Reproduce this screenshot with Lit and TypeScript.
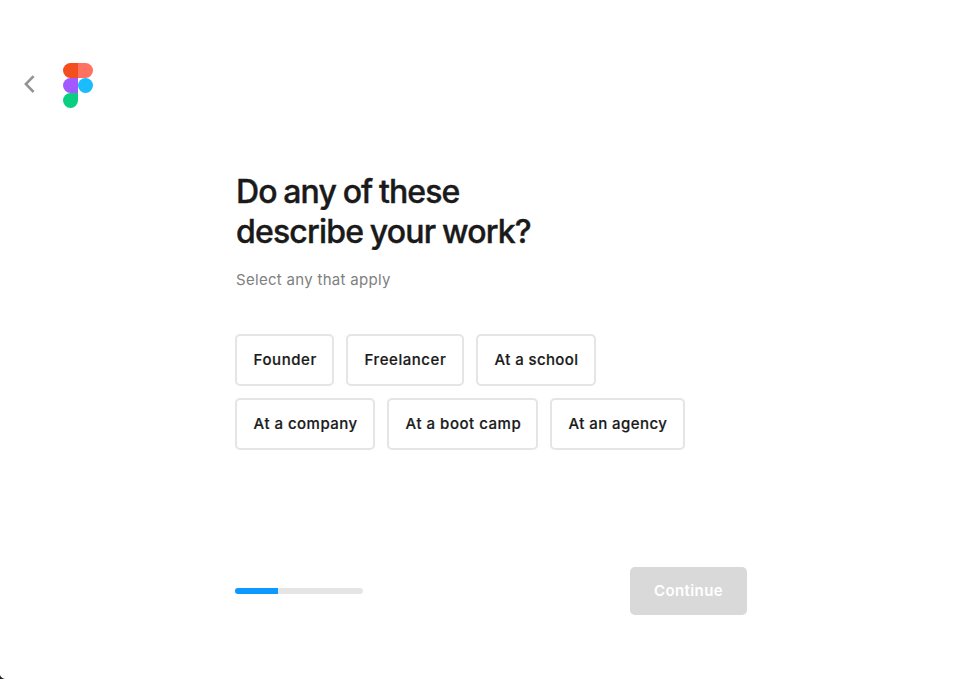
import { LitElement, html, css } from "lit";
import { customElement, state } from "lit/decorators.js";
import { classMap } from "lit/directives/class-map.js";
import { styleMap } from "lit/directives/style-map.js";

interface Option {
  label: string;
  width: number;
  spacing: number;
}

const OPTION_ROWS: Option[][] = [
  [
    { label: "Founder", width: 99, spacing: 0.55 },
    { label: "Freelancer", width: 118, spacing: 0.55 },
    { label: "At a school", width: 120, spacing: 0.38 },
  ],
  [
    { label: "At a company", width: 140, spacing: 0.48 },
    { label: "At a boot camp", width: 151, spacing: 0.52 },
    { label: "At an agency", width: 135, spacing: 0.42 },
  ],
];

@customElement("app-root")
export class AppRoot extends LitElement {
  @state() private selected = new Set<string>();

  static styles = css`
    :host {
      display: block;
      position: relative;
      box-sizing: border-box;
      height: 679px;
      overflow: hidden;
      background: #fff;
      color: #1a1a1a;
      font-family: Inter, "Liberation Sans", sans-serif;
    }
    button {
      font: inherit;
      color: inherit;
      background: none;
      border: 0;
      padding: 0;
      margin: 0;
    }
    header {
      display: flex;
      align-items: center;
      gap: 27px;
      padding: 63px 0 0 23px;
      height: 45px;
    }
    .back {
      width: 13px;
      height: 45px;
    }
    svg {
      display: block;
    }
    main {
      width: 512px;
      margin: 64px 0 0 235px;
    }
    h1 {
      margin: 0 0 0 1px;
      font-size: 32px;
      line-height: 40px;
      font-weight: 500;
      -webkit-text-stroke: 0.4px currentColor;
      white-space: nowrap;
    }
    .line {
      display: block;
      letter-spacing: -0.94px;
      word-spacing: -0.8px;
    }
    .line + .line {
      letter-spacing: -0.82px;
      word-spacing: -1px;
    }
    .hint {
      margin: 16px 0 0 1px;
      font-size: 15px;
      line-height: 24px;
      letter-spacing: 0.3px;
      color: #808080;
    }
    .options {
      display: flex;
      flex-direction: column;
      gap: 12px;
      margin-top: 42px;
    }
    .row {
      display: flex;
      gap: 12px;
    }
    .option {
      box-sizing: border-box;
      height: 52px;
      padding-left: 16.6px;
      border: 2px solid #e5e5e5;
      border-radius: 5px;
      font-size: 15px;
      line-height: 24px;
      font-weight: 500;
      -webkit-text-stroke: 0.2px currentColor;
      text-align: left;
      white-space: nowrap;
    }
    .option.on {
      border-color: #0d99ff;
    }
    footer {
      display: flex;
      align-items: center;
      justify-content: space-between;
      margin-top: 117px;
    }
    .track {
      width: 128px;
      height: 6px;
      border-radius: 3px;
      overflow: hidden;
      background: #e5e5e5;
    }
    .fill {
      height: 100%;
      background: #0d99ff;
    }
    .continue {
      box-sizing: border-box;
      width: 117px;
      height: 48px;
      padding-bottom: 2px;
      border-radius: 5px;
      background: #d9d9d9;
      color: #fff;
      font-size: 15px;
      font-weight: 600;
      letter-spacing: 0.4px;
    }
    .corner {
      position: absolute;
      left: 0;
      bottom: 0;
    }
  `;

  private toggle(label: string) {
    const next = new Set(this.selected);
    if (!next.delete(label)) next.add(label);
    this.selected = next;
  }

  render() {
    return html`
      <header>
        <button class="back" aria-label="Back">
          <svg width="13" height="45" viewBox="0 0 13 45" fill="none" stroke="#949494" stroke-width="2.6">
            <path d="M10.6 13.2 2.9 21.1 10.6 29" />
          </svg>
        </button>
        <svg width="30" height="45" viewBox="0 0 30 45">
          <path d="M7.5 0H15V15H7.5a7.5 7.5 0 0 1 0-15Z" fill="#f24e1e" />
          <path d="M15 0h7.5a7.5 7.5 0 0 1 0 15H15Z" fill="#ff7262" />
          <path d="M7.5 15H15V30H7.5a7.5 7.5 0 0 1 0-15Z" fill="#a259ff" />
          <circle cx="22.5" cy="22.5" r="7.5" fill="#1abcfe" />
          <path d="M7.5 30H15v7.5A7.5 7.5 0 1 1 7.5 30Z" fill="#0acf83" />
        </svg>
      </header>
      <main>
        <h1><span class="line">Do any of these</span><span class="line">describe your work?</span></h1>
        <p class="hint">Select any that apply</p>
        <div class="options">
          ${OPTION_ROWS.map(
            (row) => html`<div class="row">
              ${row.map(
                (o) => html`<button
                  class=${classMap({ option: true, on: this.selected.has(o.label) })}
                  style=${styleMap({ width: `${o.width}px`, letterSpacing: `${o.spacing}px` })}
                  @click=${() => this.toggle(o.label)}
                >${o.label}</button>`
              )}
            </div>`
          )}
        </div>
        <footer>
          <div class="track"><div class="fill" style=${styleMap({ width: `${(43 / 128) * 100}%` })}></div></div>
          <button class="continue">Continue</button>
        </footer>
      </main>
      <svg class="corner" width="5" height="4" viewBox="0 0 5 4"><path d="M0 0Q1 3 5 4H0Z" fill="#222" /></svg>
    `;
  }
}
